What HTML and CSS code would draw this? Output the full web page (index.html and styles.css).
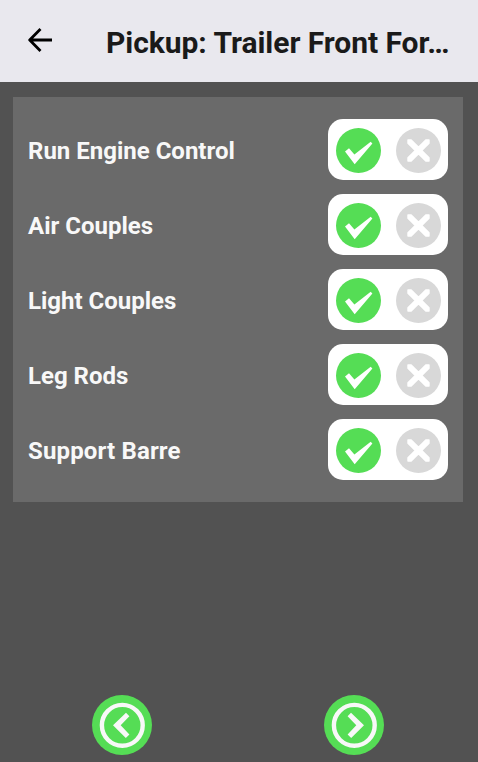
FILE: index.html
```
<!DOCTYPE html>
<html lang="en">
<head>
    <meta charset="UTF-8">
    <meta name="viewport" content="width=device-width, initial-scale=1.0">
    <title>Pickup</title>
    <link rel="stylesheet" href="styles.css">
</head>
<body>
<!-- Shared icons -->
<svg class="sprite" aria-hidden="true">
    <symbol id="yes" viewBox="0 0 45 45">
        <circle cx="22.5" cy="22.5" r="22.5" fill="#55dd55"/>
        <path d="M9 23.6L13 20.3L18.4 26.4L34.7 13.8L36.4 15.4L18.7 36.2Z" fill="#fff"/>
    </symbol>
    <symbol id="no" viewBox="0 0 45 45">
        <circle cx="22.5" cy="22.5" r="22.5" fill="#d8d8d8"/>
        <path d="M12 12H15.2L22.5 19.3L29.8 12H33V15.2L25.7 22.5L33 29.8V33H29.8L22.5 25.7L15.2 33H12V29.8L19.3 22.5L12 15.2Z" fill="#fff" stroke="#fff" stroke-width="1.4" stroke-linejoin="round"/>
    </symbol>
</svg>
<header class="topbar">
    <button class="back" aria-label="Back">
        <svg width="24" height="24" viewBox="0 0 24 24" fill="none" stroke="#000" stroke-width="2.8" stroke-linejoin="round">
            <path d="M24 12H2M12.5 1L1.7 12L12.5 23"/>
        </svg>
    </button>
    <h1>Pickup: Trailer Front For…</h1>
</header>
<main>
    <ul class="checklist">
        <li>
            <span>Run Engine Control</span>
            <div class="toggle"><svg><use href="#yes"/></svg><svg><use href="#no"/></svg></div>
        </li>
        <li>
            <span>Air Couples</span>
            <div class="toggle"><svg><use href="#yes"/></svg><svg><use href="#no"/></svg></div>
        </li>
        <li>
            <span>Light Couples</span>
            <div class="toggle"><svg><use href="#yes"/></svg><svg><use href="#no"/></svg></div>
        </li>
        <li>
            <span>Leg Rods</span>
            <div class="toggle"><svg><use href="#yes"/></svg><svg><use href="#no"/></svg></div>
        </li>
        <li>
            <span class="wide">Support Barre</span>
            <div class="toggle"><svg><use href="#yes"/></svg><svg><use href="#no"/></svg></div>
        </li>
    </ul>
</main>
<footer class="pager">
    <button aria-label="Previous">
        <svg width="60" height="60" viewBox="0 0 60 60">
            <circle cx="30" cy="30" r="30" fill="#55dd55"/>
            <circle cx="30.3" cy="30.3" r="20.4" fill="none" stroke="#f8f8f8" stroke-width="4.4"/>
            <path d="M21 30.3L34 17.7L37.4 21.3L28.7 30.3L37.4 39.4L33.8 43Z" fill="#f8f8f8"/>
        </svg>
    </button>
    <button aria-label="Next">
        <svg width="60" height="60" viewBox="0 0 60 60">
            <circle cx="30" cy="30" r="30" fill="#55dd55"/>
            <circle cx="30.3" cy="30.3" r="20.4" fill="none" stroke="#f8f8f8" stroke-width="4.4"/>
            <path d="M40 30.3L27 17.7L23.6 21.3L32.3 30.3L23.6 39.4L27.2 43Z" fill="#f8f8f8"/>
        </svg>
    </button>
</footer>
</body>
</html>
```
FILE: styles.css
```
* {
    box-sizing: border-box;
}

body {
    margin: 0;
    height: 100vh;
    display: flex;
    flex-direction: column;
    overflow: hidden;
    background: #525252;
    font-family: Roboto, sans-serif;
}

button {
    display: block;
    padding: 0;
    border: none;
    background: none;
}

svg {
    display: block;
}

.sprite {
    display: none;
}

.topbar {
    display: flex;
    align-items: center;
    height: 82px;
    padding: 0 28px;
    background: #e9e8ee;
}

.topbar h1 {
    margin: 4px 0 0 54px;
    color: #1a1a1a;
    font-size: 30px;
    font-weight: 700;
    line-height: 36px;
    letter-spacing: -0.04px;
    white-space: nowrap;
}

.back {
    margin-bottom: 2px;
}

main {
    flex: 1;
    padding: 15px 15px 0 13px;
}

.checklist {
    display: flex;
    flex-direction: column;
    gap: 14px;
    margin: 0;
    padding: 22px 15px;
    background: #6a6a6a;
    list-style: none;
}

.checklist li {
    display: flex;
    justify-content: space-between;
    align-items: center;
    color: #f8f8f8;
    font-size: 24px;
    font-weight: 700;
    line-height: 30px;
}

.checklist span {
    padding-top: 2px;
}

.checklist .wide {
    letter-spacing: 0.15px;
}

.toggle {
    display: flex;
    align-items: center;
    gap: 15px;
    width: 120px;
    height: 61px;
    padding: 1px 0 0 8px;
    border-radius: 15px;
    background: #fff;
}

.toggle svg {
    width: 45px;
    height: 45px;
}

.pager {
    display: flex;
    gap: 172px;
    padding: 0 0 7px 92px;
}
```
